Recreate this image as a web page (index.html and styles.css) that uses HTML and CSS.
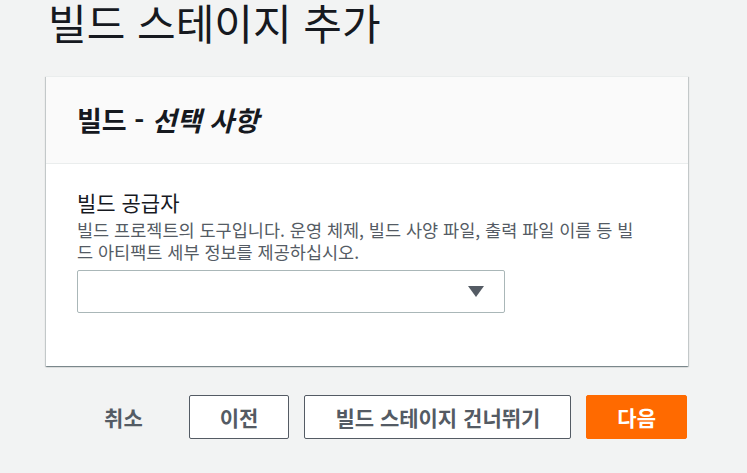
FILE: index.html
```html
<!DOCTYPE html>
<html lang="ko">
<head>
    <meta charset="UTF-8">
    <meta name="viewport" content="width=device-width, initial-scale=1.0">
    <title>빌드 스테이지 추가</title>
    <link rel="stylesheet" href="styles.css">
</head>
<body>
    <div class="page">
        <h1 class="page-title">빌드 스테이지 추가</h1>

        <!-- Carte : étape de build -->
        <div class="card">
            <div class="card-header">
                <h2>빌드 - <em>선택 사항</em></h2>
            </div>
            <div class="card-body">
                <label class="field-label" for="provider">빌드 공급자</label>
                <p class="field-desc">빌드 프로젝트의 도구입니다. 운영 체제, 빌드 사양 파일, 출력 파일 이름 등 빌드 아티팩트 세부 정보를 제공하십시오.</p>
                <div class="select" id="provider">
                    <span class="select-arrow"></span>
                </div>
            </div>
        </div>

        <!-- Boutons d'action -->
        <div class="actions">
            <button class="btn btn-link">취소</button>
            <button class="btn">이전</button>
            <button class="btn">빌드 스테이지 건너뛰기</button>
            <button class="btn btn-primary">다음</button>
        </div>
    </div>
</body>
</html>
```

FILE: styles.css
```css
body {
    margin: 0;
    background-color: #f2f3f3;
    font-family: "Noto Sans CJK KR", "Noto Sans", sans-serif;
    color: #16191f;
}

.page {
    width: 642px;
    padding: 0 0 0 46px;
}

.page-title {
    margin: 0;
    padding: 0 0 0 2px;
    font-size: 42px;
    font-weight: 400;
    line-height: 44px;
    height: 76px;
}

.card {
    background-color: #fff;
    border-top: 1px solid #eaeded;
    box-shadow: 0 1px 1px 0 rgba(0, 28, 36, 0.3), 1px 1px 1px 0 rgba(0, 28, 36, 0.15), -1px 1px 1px 0 rgba(0, 28, 36, 0.15);
}

.card-header {
    background-color: #fafafa;
    border-bottom: 1px solid #eaeded;
    height: 86px;
    display: flex;
    align-items: center;
    padding: 0 31px;
}

.card-header h2 {
    margin: 0;
    font-size: 27px;
    font-weight: 700;
    line-height: 32px;
}

.card-header em {
    font-style: italic;
}

.card-body {
    padding: 26px 31px 53px;
}

.field-label {
    display: block;
    margin-bottom: 5px;
    font-size: 21px;
    line-height: 24px;
}

.field-desc {
    margin: 0 0 7px;
    width: 568px;
    font-size: 17.5px;
    line-height: 22px;
    color: #545b64;
    word-break: break-all;
}

.select {
    position: relative;
    width: 426px;
    height: 41px;
    border: 1px solid #aab7b8;
    border-radius: 2px;
    background-color: #fff;
}

.select-arrow {
    position: absolute;
    right: 20px;
    top: 15px;
    width: 0;
    height: 0;
    border-left: 8px solid transparent;
    border-right: 8px solid transparent;
    border-top: 11px solid #545b64;
}

.actions {
    display: flex;
    justify-content: flex-end;
    gap: 15px;
    margin-top: 29px;
    padding-right: 1px;
}

.btn {
    height: 44px;
    padding: 0 30px;
    font-family: inherit;
    font-size: 21px;
    font-weight: 700;
    color: #545b64;
    background-color: #fff;
    border: 1px solid #545b64;
    border-radius: 2px;
    cursor: pointer;
}

.btn-link {
    background: transparent;
    border-color: transparent;
}

.btn-primary {
    color: #fff;
    background-color: #ff6a00;
    border-color: #ff6a00;
}
```
